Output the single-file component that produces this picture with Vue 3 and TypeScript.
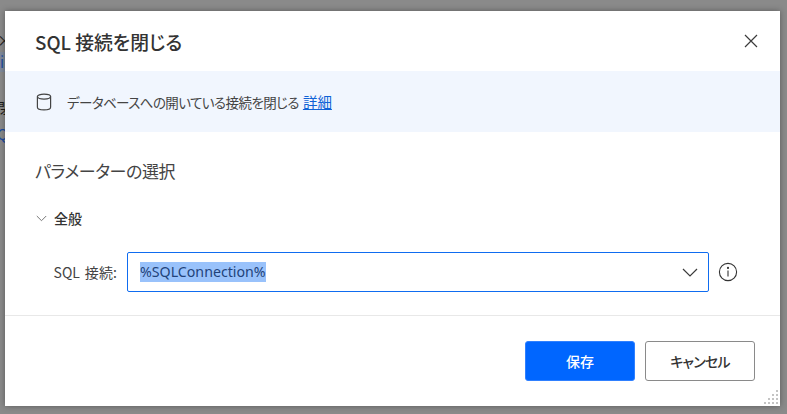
<script setup lang="ts">
const title = 'SQL 接続を閉じる'
</script>

<template>
  <div class="backdrop">
    <div class="peek">
      <span class="peek-x">×</span>
      <span class="peek-link band">i</span>
      <span class="peek-dark">閉</span>
      <span class="peek-link">Q</span>
    </div>
    <section class="dialog">
      <header class="head">
        <h1>{{ title }}</h1>
        <svg class="close" width="14" height="14" viewBox="0 0 14 14" fill="none" stroke="#3b3b3b" stroke-width="1.2">
          <path d="M1 1l12 12M13 1L1 13" />
        </svg>
      </header>
      <div class="banner">
        <svg class="db" width="16" height="18" viewBox="0 0 16 18" fill="none" stroke="#444" stroke-width="1.2">
          <ellipse cx="8" cy="3.6" rx="6.6" ry="2.5" />
          <path d="M1.4 3.6v10.6c0 1.5 3 2.6 6.6 2.6s6.6-1.1 6.6-2.6V3.6" />
        </svg>
        <span class="desc">データベースへの開いている接続を閉じる</span>
        <a class="more">詳細</a>
      </div>
      <div class="body">
        <h2>パラメーターの選択</h2>
        <div class="group">
          <svg width="11" height="7" viewBox="0 0 11 7" fill="none" stroke="#777" stroke-width="1">
            <path d="M.8 1l4.7 4.7L10.2 1" />
          </svg>
          <span>全般</span>
        </div>
        <div class="field">
          <label>SQL 接続:</label>
          <div class="select">
            <span class="value">%SQLConnection%</span>
            <svg width="16" height="9" viewBox="0 0 16 9" fill="none" stroke="#3b3b3b" stroke-width="1.2">
              <path d="M1 1l7 7 7-7" />
            </svg>
          </div>
          <svg class="info" width="20" height="20" viewBox="0 0 20 20" fill="none" stroke="#333" stroke-width="1.1">
            <circle cx="10" cy="10" r="8.6" />
            <path d="M10 8.6v6" />
            <circle cx="10" cy="5.9" r=".5" fill="#333" />
          </svg>
        </div>
      </div>
      <footer class="foot">
        <button class="btn primary">保存</button>
        <button class="btn cancel">キャンセル</button>
      </footer>
      <svg class="grip" width="15" height="15" viewBox="0 0 15 15" fill="#c4c4c4">
        <rect x="12" y="0" width="2" height="2" />
        <rect x="12" y="4" width="2" height="2" /><rect x="8" y="4" width="2" height="2" />
        <rect x="12" y="8" width="2" height="2" /><rect x="8" y="8" width="2" height="2" /><rect x="4" y="8" width="2" height="2" />
        <rect x="12" y="12" width="2" height="2" /><rect x="8" y="12" width="2" height="2" /><rect x="4" y="12" width="2" height="2" /><rect x="0" y="12" width="2" height="2" />
      </svg>
    </section>
  </div>
</template>

<style>
html, body { margin: 0; }
</style>

<style scoped>
.backdrop {
  position: relative;
  width: 787px;
  height: 414px;
  box-sizing: border-box;
  padding: 11px 7px 8px 5px;
  background: #8a8a8a;
  overflow: hidden;
  font-family: "Noto Sans CJK JP", "Noto Sans", sans-serif;
  font-feature-settings: "palt";
}
.peek { position: absolute; left: -3px; top: 30px; width: 8px; display: flex; flex-direction: column; font-size: 15px; line-height: 20px; color: #1c1c1c; }
.peek-x { height: 22px; }
.peek-link { color: #1d4da0; }
.peek-link.band { height: 46px; padding-left: 3px; background: linear-gradient(#7f8a9b 0, #7f8a9b 20px, transparent 20px); }
.peek-dark { height: 26px; }
.dialog {
  position: relative;
  height: 100%;
  background: #fff;
  display: flex;
  flex-direction: column;
  box-shadow: 0 0 6px rgba(0, 0, 0, .35);
}
.head {
  height: 60px;
  display: flex;
  align-items: center;
  justify-content: space-between;
  padding: 0 22px 0 30px;
}
h1 { margin: 0; font-size: 18.8px; font-weight: 500; color: #333; }
.banner {
  height: 61px;
  background: #f1f6fe;
  display: flex;
  align-items: center;
  padding-left: 31px;
  font-size: 13.5px;
  color: #444;
}
.db { margin-right: 15px; }
.desc { margin-right: 4px; letter-spacing: -.58px; }
.more { font-size: 14.5px; color: #0f62d6; text-decoration: underline; }
.body { flex: 1; padding: 27px 42px 0 30px; border-bottom: 1px solid #e8e8e8; }
h2 { margin: 0; font-size: 17px; line-height: 24px; font-weight: 400; letter-spacing: -.4px; color: #444; }
.group { display: flex; align-items: center; gap: 7px; margin-top: 25px; font-size: 14px; font-weight: 500; color: #333; }
.group svg { margin-left: 1px; }
.field { display: flex; align-items: center; margin-top: 24px; }
label { width: 92px; padding-right: 10px; box-sizing: border-box; text-align: right; font-size: 14px; letter-spacing: .1px; word-spacing: 1.5px; color: #444; }
.select {
  flex: 1;
  height: 40px;
  box-sizing: border-box;
  display: flex;
  align-items: center;
  justify-content: space-between;
  padding: 0 10px 0 12px;
  border: 1px solid #0f6cf0;
  border-radius: 2px;
}
.value { background: #99c2fb; color: #22427a; font-size: 14.2px; line-height: 20px; font-family: "Noto Sans", sans-serif; }
.info { margin-left: 9px; }
.foot {
  height: 90px;
  display: flex;
  align-items: flex-start;
  justify-content: flex-end;
  gap: 10px;
  padding: 25px 25px 0 0;
  box-sizing: border-box;
}
.btn {
  width: 110px;
  height: 40px;
  border: 1px solid #8a8a8a;
  border-radius: 3px;
  background: #fff;
  color: #333;
  font: 500 14px "Noto Sans CJK JP", sans-serif;
  font-feature-settings: "palt";
}
.btn.primary { background: #0066ff; border-color: #2f80ff; color: #fff; }
.btn.cancel { letter-spacing: -.8px; }
.grip { position: absolute; right: 1px; bottom: 1px; }
</style>
